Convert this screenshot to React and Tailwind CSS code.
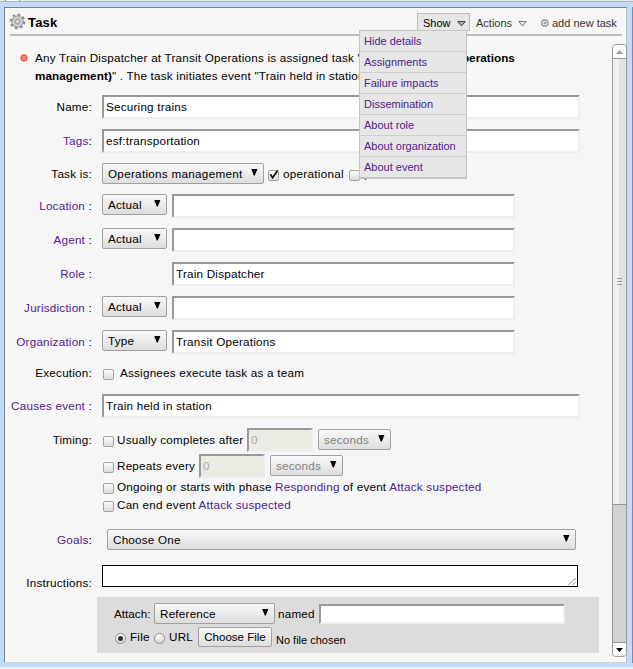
import React from "react";

const LINK = "text-[#51218d]";

function Label({ children, link, colon = ":", className = "mt-[5px]" }) {
  return (
    <div className={`mr-[10px] w-[92px] shrink-0 text-right whitespace-pre ${className}`}>
      <span className={link ? LINK : ""}>{children}</span>
      {colon}
    </div>
  );
}

function Field({ children, disabled, className = "" }) {
  return (
    <div className={`shrink-0 border-2 border-t-[#999] border-l-[#999] border-r-[#eee] border-b-[#eee] pl-[2px] pt-[3px] whitespace-pre ${disabled ? "bg-[#ebebe4] text-[#aaa]" : "bg-white"} ${className}`}>
      {children}
    </div>
  );
}

function Select({ children, className = "" }) {
  return (
    <div className={`flex h-[21px] shrink-0 justify-between rounded-[2px] border border-[#a0a0a0] bg-linear-to-b from-[#f8f8f8] to-[#dddddd] pl-[5px] pr-[5px] pt-[3px] whitespace-pre ${className}`}>
      <span>{children}</span>
      <svg width="7" height="7" viewBox="0 0 7 7" className="mt-[2px]">
        <path d="M0.2 0h6.2L3.8 6.6H2.8z" fill="#000" />
      </svg>
    </div>
  );
}

function Check({ checked, className = "" }) {
  return (
    <span className={`relative h-[11px] w-[11px] shrink-0 rounded-[2px] border border-[#a3a3a3] bg-linear-to-b from-[#fafafa] to-[#dcdcdc] ${className}`}>
      {checked && (
        <svg width="13" height="12" viewBox="0 0 13 12" className="absolute -top-[2px] -left-px">
          <path d="M2.3 5.3L4.6 8.8L9.6 1.4" fill="none" stroke="#111" strokeWidth="1.7" />
        </svg>
      )}
    </span>
  );
}

function Radio({ checked, className = "" }) {
  return (
    <span className={`flex h-[11px] w-[11px] shrink-0 items-center justify-center rounded-full border border-[#8d8d8d] bg-linear-to-b from-[#fcfcfc] to-[#d8d8d8] ${className}`}>
      {checked && <span className="h-[5px] w-[5px] rounded-full bg-[#333]" />}
    </span>
  );
}

function MenuArrow({ dark }) {
  return (
    <svg width="9" height="7" viewBox="0 0 9 7">
      <path d="M0.8 1.500h7.400L5 5.500H4z" fill={dark ? "#aaa" : "#eee"} stroke={dark ? "#444" : "#777"} />
    </svg>
  );
}

function PickRow({ name, type, value }) {
  return (
    <div className={`flex ${name === "Organization" ? "h-[31px]" : "h-[34px]"}`}>
      <Label link colon=" :">{name}</Label>
      <div className="w-[70px] shrink-0">{type && <Select className="w-[65px]">{type}</Select>}</div>
      <Field className="h-[24px] w-[343px]">{value}</Field>
    </div>
  );
}

const menu = ["Hide details", "Assignments", "Failure impacts", "Dissemination", "About role", "About organization", "About event"];

function Gear() {
  return (
    <svg width="17" height="17" viewBox="0 0 17 17" className="mt-[5px] ml-[4px] shrink-0">
      <circle cx="8.500" cy="8.500" r="6.800" fill="none" stroke="#8c8c8c" strokeWidth="2.200" strokeDasharray="2.600 2.741" />
      <circle cx="8.500" cy="8.500" r="5.600" fill="#d4d4d4" stroke="#8c8c8c" />
      <circle cx="8.500" cy="8.500" r="3.300" fill="#c4c4c4" stroke="#b4b4b4" strokeWidth="0.600" />
      <circle cx="8.500" cy="8.500" r="1.900" fill="#eee" stroke="#909090" />
    </svg>
  );
}

function ScrollBar() {
  return (
    <div className="flex h-[613px] w-[15px] shrink-0 flex-col overflow-hidden rounded-[4px] border border-[#999] bg-[#d2d2d2]">
      <div className="flex h-[14px] shrink-0 items-center justify-center border-b border-[#999] bg-[#fbfbfb]">
        <svg width="7" height="4" viewBox="0 0 7 4"><path d="M0 4L3.500 0L7 4z" fill="#999" /></svg>
      </div>
      <div className="flex h-[446px] shrink-0 flex-col items-center justify-center gap-[2px] border-b border-[#999] bg-linear-to-r from-[#f0f0f0] from-50% to-[#e2e2e2] to-50%">
        <span className="h-px w-[5px] bg-[#999]" />
        <span className="h-px w-[5px] bg-[#999]" />
        <span className="h-px w-[5px] bg-[#999]" />
      </div>
      <div className="grow" />
      <div className="flex h-[14px] shrink-0 items-center justify-center border-t border-[#999] bg-[#fbfbfb]">
        <svg width="7" height="4" viewBox="0 0 7 4"><path d="M0 0L3.500 4L7 0z" fill="#000" /></svg>
      </div>
    </div>
  );
}

export default function App() {
  return (
    <div className="flex h-[669px] w-[633px] flex-col overflow-hidden bg-[#c3d9ff] font-['Liberation_Sans',Arial,sans-serif] text-[11.7px] leading-[14px] tracking-[0.21px] text-black">
      <div className="flex h-[2px] w-full shrink-0 border-b border-[#aab7b5] bg-[#ececec]">
        <span className="ml-[5px] h-px w-[15px] border-x border-[#888] bg-white" />
      </div>
      <div className="flex h-[665px] shrink-0 pt-[5px]">
        <div className="ml-[4px] h-[656px] w-[623px] shrink-0 border border-t-[#738783] border-l-[#738783] border-r-[#a9c7c0] border-b-[#bcd9d2] bg-[#f6f6f6]">
          <header className="relative ml-[5px] flex h-[28px] w-[612px] border-b-2 border-[#bbb]">
            <div className="-ml-[5px] flex"><Gear /></div>
            <h1 className="mt-[8px] ml-[2px] text-[13px] font-bold tracking-[0.2px]">Task</h1>
            <div className="absolute top-[5px] right-[5px] flex h-[18px] text-[11px] tracking-normal">
              <div className="flex h-[18px] w-[53px] border border-[#bbb] bg-[#e6e6e6] pt-[2px] pl-[5px]">
                <span>Show</span>
                <span className="mt-[4px] ml-[6px]"><MenuArrow dark /></span>
              </div>
              <div className="flex w-[71px] pt-[3px] pl-[6px] text-[#333]">
                <span>Actions</span>
                <span className="mt-[4px] ml-[6px]"><MenuArrow /></span>
              </div>
              <div className="flex w-[76px] pt-[3px] text-[#333] whitespace-pre">
                <svg width="8" height="8" viewBox="0 0 8 8" className="mt-[3px] mr-[3px] shrink-0">
                  <circle cx="4" cy="4" r="3.200" fill="#fff" stroke="#888" strokeWidth="1.200" />
                  <path d="M4 2.200v3.600M2.200 4h3.600" stroke="#777" strokeWidth="0.900" />
                </svg>
                <span>add new task</span>
              </div>
            </div>
            <nav className="absolute top-[22px] left-[349px] z-10 w-[108px] border border-b-2 border-[#c4c4c4] bg-[#e6e6e6] text-[11px] tracking-normal">
              {menu.map((item, i) => (
                <div key={item} className={`pt-[3px] pl-[4px] whitespace-pre ${LINK} ${i < menu.length - 1 ? "h-[21px] border-b border-[#ccc]" : "h-[20px]"}`}>{item}</div>
              ))}
            </nav>
          </header>
          <div className="flex pt-[8px]">
            <main className="w-[607px] shrink-0 overflow-hidden">
              <div className="-ml-[5px] w-[612px]">
                <div className="flex h-[51px] pt-[6px]">
                  <svg width="8" height="8" viewBox="0 0 8 8" className="mt-[4px] ml-[20px] mr-[7px] shrink-0">
                    <circle cx="4" cy="4" r="3.200" fill="#ff8066" stroke="#d0513c" />
                  </svg>
                  <div className="leading-[18px] whitespace-pre">
                    <div className="-mt-px">Any Train Dispatcher at Transit Operations is assigned task "<b className="tracking-[0.04px]">Securing trains (operations</b></div>
                    <div><b className="tracking-[0.08px]">management)</b>" . The task initiates event "Train held in station".</div>
                  </div>
                </div>
                <div className="flex h-[34px]">
                  <Label>Name</Label>
                  <Field className="h-[24px] w-[478px]">Securing trains</Field>
                </div>
                <div className="flex h-[34px]">
                  <Label link>Tags</Label>
                  <Field className="h-[24px] w-[478px]">esf:transportation</Field>
                </div>
                <div className="flex h-[31px]">
                  <Label className="mt-[4px]">Task is</Label>
                  <Select className="w-[162px] tracking-[0.28px]">Operations management</Select>
                  <Check checked className="mt-[7px] ml-[4px]" />
                  <span className="mt-[4px] ml-[4px] w-[62px] tracking-[0.28px]">operational</span>
                  <Check className="mt-[7px] ml-[4px]" />
                  <span className="mt-[4px] ml-[4px]">prohibited</span>
                </div>
                <PickRow name="Location" type="Actual" />
                <PickRow name="Agent" type="Actual" />
                <PickRow name="Role" value="Train Dispatcher" />
                <PickRow name="Jurisdiction" type="Actual" />
                <PickRow name="Organization" type="Type" value="Transit Operations" />
                <div className="flex h-[33px]">
                  <Label>Execution</Label>
                  <Check className="mt-[8px] ml-px" />
                  <span className="mt-[5px] ml-[6px]">Assignees execute task as a team</span>
                </div>
                <div className="flex h-[34px]">
                  <Label link colon=" :">Causes event</Label>
                  <Field className="h-[24px] w-[478px]">Train held in station</Field>
                </div>
                <div className="flex h-[101px]">
                  <Label>Timing</Label>
                  <div className="whitespace-pre">
                    <div className="flex h-[26px]">
                      <Check className="mt-[8px] ml-px" />
                      <span className="mt-[5px] ml-[3px] w-[130px]">Usually completes after</span>
                      <Field disabled className="h-[24px] w-[66px]">0</Field>
                      <Select className="mt-px ml-[5px] w-[73px] text-[#808080]">seconds</Select>
                    </div>
                    <div className="flex h-[26px]">
                      <Check className="mt-[8px] ml-px" />
                      <span className="mt-[5px] ml-[3px] w-[82px]">Repeats every</span>
                      <Field disabled className="h-[24px] w-[66px]">0</Field>
                      <Select className="mt-px ml-[5px] w-[73px] text-[#808080]">seconds</Select>
                    </div>
                    <div className="flex h-[18px]">
                      <Check className="mt-[3px] ml-px" />
                      <span className="ml-[3px]">Ongoing or starts with phase <a className={LINK}>Responding</a> of event <a className={LINK}>Attack suspected</a></span>
                    </div>
                    <div className="flex h-[18px]">
                      <Check className="mt-[3px] ml-px" />
                      <span className="ml-[3px]">Can end event <a className={LINK}>Attack suspected</a></span>
                    </div>
                  </div>
                </div>
                <div className="flex h-[36px]">
                  <Label link className="mt-[4px]">Goals</Label>
                  <Select className="ml-[5px] w-[469px]">Choose One</Select>
                </div>
                <div className="flex h-[32px]">
                  <Label className="mt-[11px]">Instructions</Label>
                  <div className="flex h-[22px] w-[476px] items-end justify-end border border-black bg-white">
                    <svg width="9" height="9" viewBox="0 0 9 9"><path d="M0.500 8L7.500 1M4.500 8L7.500 5" stroke="#777" strokeWidth="0.900" /></svg>
                  </div>
                </div>
                <div className="ml-[97px] h-[56px] w-[502px] bg-[#dcdcdc] pt-[6px] pl-[17px] whitespace-pre">
                  <div className="flex h-[24px]">
                    <span className="mt-[4px] w-[40px] tracking-normal">Attach:</span>
                    <Select className="w-[121px]">Reference</Select>
                    <span className="mt-[4px] ml-[3px] w-[41px]">named</span>
                    <Field className="mt-px h-[20px] w-[246px]" />
                  </div>
                  <div className="flex">
                    <Radio checked className="mt-[6px] ml-px" />
                    <span className="mt-[3px] ml-[4px] w-[24px]">File</span>
                    <Radio className="mt-[6px]" />
                    <span className="mt-[3px] ml-[4px] w-[29px]">URL</span>
                    <span className="h-[20px] w-[74px] rounded-[2px] border border-[#a0a0a0] bg-linear-to-b from-[#f8f8f8] to-[#dddddd] pt-[2px] text-center text-[11.5px] tracking-normal">Choose File</span>
                    <span className="mt-[6px] ml-[4px] text-[11px] tracking-normal">No file chosen</span>
                  </div>
                </div>
              </div>
            </main>
            <ScrollBar />
          </div>
        </div>
        <div className="ml-[5px] h-[656px] w-px bg-[#7d8b96]" />
      </div>
      <div className="h-[2px] w-full bg-[#eef1f6]" />
    </div>
  );
}
